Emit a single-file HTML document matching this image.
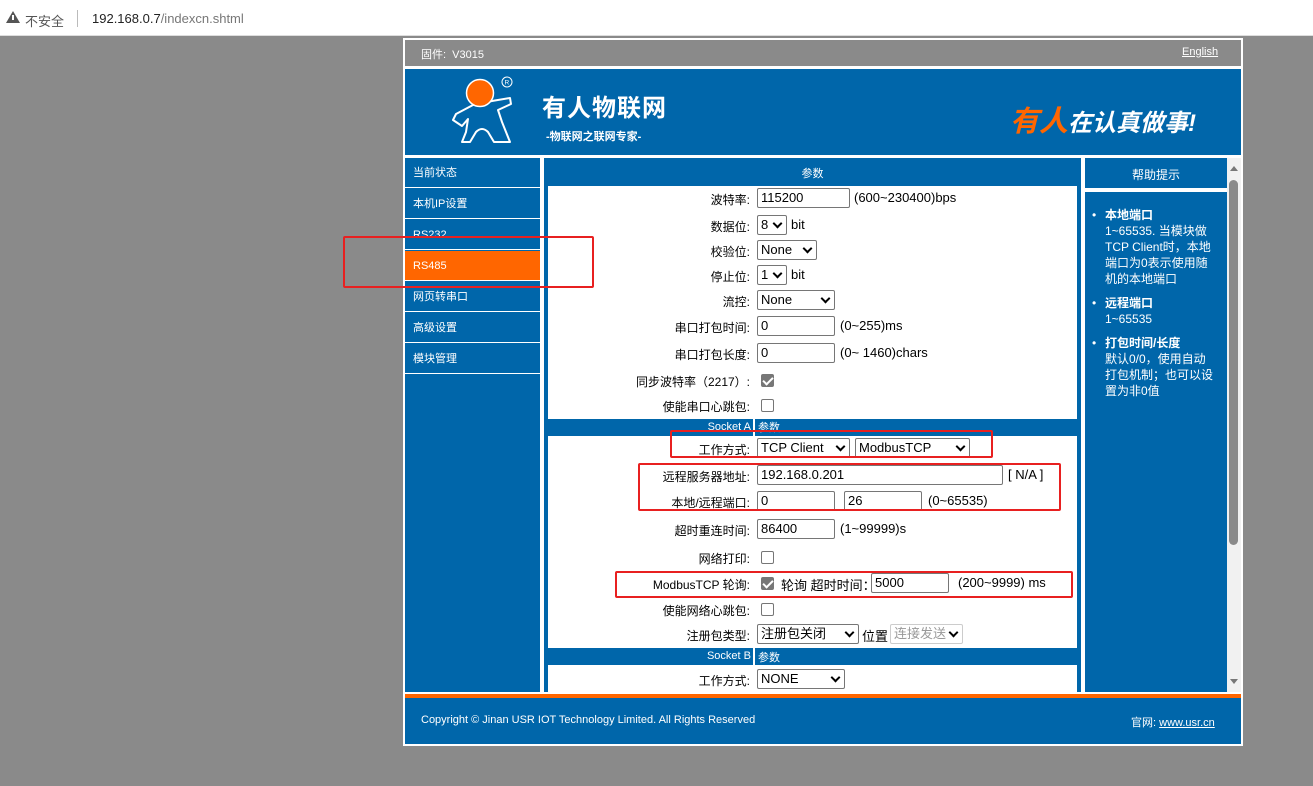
<!DOCTYPE html>
<html><head><meta charset="utf-8">
<style>
*{margin:0;padding:0;box-sizing:border-box}
body{width:1313px;height:786px;background:#8a8a8a;font-family:"Liberation Sans","Noto Sans CJK SC",sans-serif;font-size:12px;position:relative;overflow:hidden}
.a{position:absolute}
.bar{left:0;top:0;width:1313px;height:36px;background:#fff;border-bottom:1px solid #ddd}
.blue{background:#0066aa}
.w{color:#fff}
.nav div{position:absolute;left:0;width:135px;height:30px;line-height:30px;padding-left:8px;color:#fff;font-size:11px;border-bottom:1px solid #fff}
.lab{position:absolute;right:0;width:210px;text-align:right;font-size:12px;color:#000}
.row{position:absolute;left:545px;width:535px;height:22px}
.row .lab{left:0;width:205px;top:3px}
.in{position:absolute;height:20px;border:1px solid #767676;background:#fff;font-size:13px;padding-left:3px;line-height:18px;color:#000;border-radius:2px}
.sel{position:absolute;height:20px;border:1px solid #767676;background:#fff;font-size:13px;padding-left:3px;line-height:18px;border-radius:2px}
.sel:after{content:"";position:absolute;right:5px;top:4px;width:5px;height:5px;border-right:2px solid #000;border-bottom:2px solid #000;transform:rotate(45deg)}
.t{position:absolute;font-size:13px;top:2px}
.cb{position:absolute;width:13px;height:13px;border:1px solid #767676;border-radius:2px;background:#fff;top:4px}
.cb.on{background:#777;border-color:#777}
.cb.on:after{content:"";position:absolute;left:3px;top:0px;width:4px;height:8px;border-right:2px solid #fff;border-bottom:2px solid #fff;transform:rotate(45deg)}
.red{position:absolute;border:2px solid #e82020;border-radius:2px}
</style></head><body>
<div class="a bar"></div>
<div class="a" style="left:6px;top:11px;width:0;height:0;border-left:7px solid transparent;border-right:7px solid transparent;border-bottom:12px solid #555"></div>
<div class="a" style="left:12px;top:15px;width:2px;height:5px;background:#fff"></div>
<div class="a" style="left:25px;top:11px;font-size:13px;color:#555">不安全</div>
<div class="a" style="left:77px;top:10px;width:1px;height:17px;background:#bbb"></div>
<div class="a" style="left:92px;top:11px;font-size:13px;color:#222">192.168.0.7<span style="color:#777">/indexcn.shtml</span></div>

<div class="a" style="left:403px;top:38px;width:840px;height:708px;background:#fff"></div>
<div class="a" style="left:405px;top:40px;width:836px;height:26px;background:#8a8a8a"></div>
<div class="a w" style="left:421px;top:46px;font-size:11px">固件:&nbsp; V3015</div>
<div class="a w" style="left:1182px;top:46px;font-size:11px;text-decoration:underline">English</div>
<div class="a blue" style="left:405px;top:69px;width:836px;height:86px"></div>
<svg class="a" style="left:440px;top:70px" width="90" height="85" viewBox="0 0 90 85">
<path d="M33,35 L16,44 L13,50 L22,56 L28,49 L26,62 L22,72 L30,72 L36,62 Q42,56 48,62 L54,72 L70,72 L62,52 L58,40 L71,34 L70,28 L52,31 Z" fill="none" stroke="#fff" stroke-width="2" stroke-linejoin="round"/>
<circle cx="40" cy="23" r="13.5" fill="#ff6600" stroke="#fff" stroke-width="1.5"/>
<circle cx="67" cy="12" r="5" fill="none" stroke="#fff" stroke-width="1"/>
<text x="64.5" y="14.5" font-size="6.5" fill="#fff" font-family="Liberation Sans">R</text>
</svg>
<div class="a w" style="left:542px;top:88px;font-size:24px;font-weight:bold;letter-spacing:1px">有人物联网</div>
<div class="a w" style="left:546px;top:128px;font-size:11px;font-weight:bold">-物联网之联网专家-</div>
<div class="a" style="left:1010px;top:98px;font-size:29px;font-weight:bold;font-style:italic;color:#ff6600;white-space:nowrap">有人<span style="color:#fff;font-size:24px">在认真做事!</span></div>

<div class="a blue" style="left:405px;top:158px;width:135px;height:534px"></div>
<div class="a nav" style="left:405px;top:158px">
<div style="top:0">当前状态</div>
<div style="top:31px">本机IP设置</div>
<div style="top:62px">RS232</div>
<div style="top:93px;background:#ff6600">RS485</div>
<div style="top:124px">网页转串口</div>
<div style="top:155px">高级设置</div>
<div style="top:186px">模块管理</div>
</div>

<div class="a blue" style="left:544px;top:158px;width:537px;height:534px"></div>
<div class="a w" style="left:544px;top:165px;width:537px;text-align:center;font-size:11px">参数</div>
<div class="a" style="left:548px;top:186px;width:529px;height:506px;background:#fff"></div>

<div class="row" style="top:188px"><div class="lab">波特率:</div><div class="in" style="left:212px;width:93px">115200</div><div class="t" style="left:309px">(600~230400)bps</div></div>
<div class="row" style="top:215px"><div class="lab">数据位:</div><div class="sel" style="left:212px;width:30px">8</div><div class="t" style="left:246px">bit</div></div>
<div class="row" style="top:240px"><div class="lab">校验位:</div><div class="sel" style="left:212px;width:60px">None</div></div>
<div class="row" style="top:265px"><div class="lab">停止位:</div><div class="sel" style="left:212px;width:30px">1</div><div class="t" style="left:246px">bit</div></div>
<div class="row" style="top:290px"><div class="lab">流控:</div><div class="sel" style="left:212px;width:78px">None</div></div>
<div class="row" style="top:316px"><div class="lab">串口打包时间:</div><div class="in" style="left:212px;width:78px">0</div><div class="t" style="left:295px">(0~255)ms</div></div>
<div class="row" style="top:343px"><div class="lab">串口打包长度:</div><div class="in" style="left:212px;width:78px">0</div><div class="t" style="left:295px">(0~ 1460)chars</div></div>
<div class="row" style="top:370px"><div class="lab">同步波特率（2217）:</div><div class="cb on" style="left:216px"></div></div>
<div class="row" style="top:395px"><div class="lab">使能串口心跳包:</div><div class="cb" style="left:216px"></div></div>
<div class="a blue" style="left:548px;top:419px;width:529px;height:17px"></div>
<div class="a" style="left:753px;top:419px;width:2px;height:17px;background:#fff"></div>
<div class="a w" style="left:548px;top:421px;width:203px;text-align:right;font-size:11px">Socket A</div>
<div class="a w" style="left:758px;top:419px;font-size:11px">参数</div>
<div class="row" style="top:438px"><div class="lab">工作方式:</div><div class="sel" style="left:212px;width:93px">TCP Client</div><div class="sel" style="left:310px;width:115px">ModbusTCP</div></div>
<div class="row" style="top:465px"><div class="lab">远程服务器地址:</div><div class="in" style="left:212px;width:246px">192.168.0.201</div><div class="t" style="left:463px">[ N/A ]</div></div>
<div class="row" style="top:491px"><div class="lab">本地/远程端口:</div><div class="in" style="left:212px;width:78px">0</div><div class="in" style="left:299px;width:78px">26</div><div class="t" style="left:383px">(0~65535)</div></div>
<div class="row" style="top:519px"><div class="lab">超时重连时间:</div><div class="in" style="left:212px;width:78px">86400</div><div class="t" style="left:295px">(1~99999)s</div></div>
<div class="row" style="top:547px"><div class="lab">网络打印:</div><div class="cb" style="left:216px"></div></div>
<div class="row" style="top:573px"><div class="lab">ModbusTCP 轮询:</div><div class="cb on" style="left:216px"></div><div class="t" style="left:236px">轮询 超时时间：</div><div class="in" style="left:326px;width:78px">5000</div><div class="t" style="left:413px">(200~9999) ms</div></div>
<div class="row" style="top:599px"><div class="lab">使能网络心跳包:</div><div class="cb" style="left:216px"></div></div>
<div class="row" style="top:624px"><div class="lab">注册包类型:</div><div class="sel" style="left:212px;width:102px">注册包关闭</div><div class="t" style="left:317px">位置</div><div class="sel" style="left:345px;width:73px;color:#999;border-color:#ccc">连接发送</div></div>
<div class="a blue" style="left:548px;top:648px;width:529px;height:17px"></div>
<div class="a" style="left:753px;top:648px;width:2px;height:17px;background:#fff"></div>
<div class="a w" style="left:548px;top:650px;width:203px;text-align:right;font-size:11px">Socket B</div>
<div class="a w" style="left:758px;top:649px;font-size:11px">参数</div>
<div class="row" style="top:669px"><div class="lab">工作方式:</div><div class="sel" style="left:212px;width:88px">NONE</div></div>

<div class="a blue" style="left:1085px;top:158px;width:142px;height:534px"></div>
<div class="a" style="left:1085px;top:188px;width:142px;height:4px;background:#fff"></div>
<div class="a w" style="left:1085px;top:166px;width:142px;text-align:center;font-size:12px">帮助提示</div>
<div class="a w" style="left:1090px;top:207px;width:126px;font-size:12px;line-height:16px">
<div style="position:relative;padding-left:15px"><span style="position:absolute;left:2px">•</span><b>本地端口</b><br>1~65535. 当模块做TCP Client时，本地端口为0表示使用随机的本地端口</div>
<div style="position:relative;padding-left:15px;margin-top:8px"><span style="position:absolute;left:2px">•</span><b>远程端口</b><br>1~65535</div>
<div style="position:relative;padding-left:15px;margin-top:8px"><span style="position:absolute;left:2px">•</span><b>打包时间/长度</b><br>默认0/0，使用自动打包机制；也可以设置为非0值</div>
</div>
<div class="a" style="left:1227px;top:158px;width:14px;height:534px;background:#f1f1f1"></div>
<div class="a" style="left:1229px;top:180px;width:9px;height:365px;background:#8a8a8a;border-radius:5px"></div>
<div class="a" style="left:1230px;top:166px;width:0;height:0;border-left:4px solid transparent;border-right:4px solid transparent;border-bottom:5px solid #777"></div>
<div class="a" style="left:1230px;top:679px;width:0;height:0;border-left:4px solid transparent;border-right:4px solid transparent;border-top:5px solid #777"></div>

<div class="a" style="left:405px;top:694px;width:836px;height:4px;background:#ff6600"></div>
<div class="a blue" style="left:405px;top:698px;width:836px;height:46px"></div>
<div class="a w" style="left:421px;top:714px;font-size:11px">Copyright © Jinan USR IOT Technology Limited. All Rights Reserved</div>
<div class="a w" style="left:1131px;top:714px;font-size:11px">官网: <span style="text-decoration:underline">www.usr.cn</span></div>

<div class="red" style="left:343px;top:236px;width:251px;height:52px"></div>
<div class="red" style="left:670px;top:430px;width:323px;height:28px"></div>
<div class="red" style="left:638px;top:463px;width:423px;height:48px"></div>
<div class="red" style="left:615px;top:571px;width:458px;height:27px"></div>
</body></html>
